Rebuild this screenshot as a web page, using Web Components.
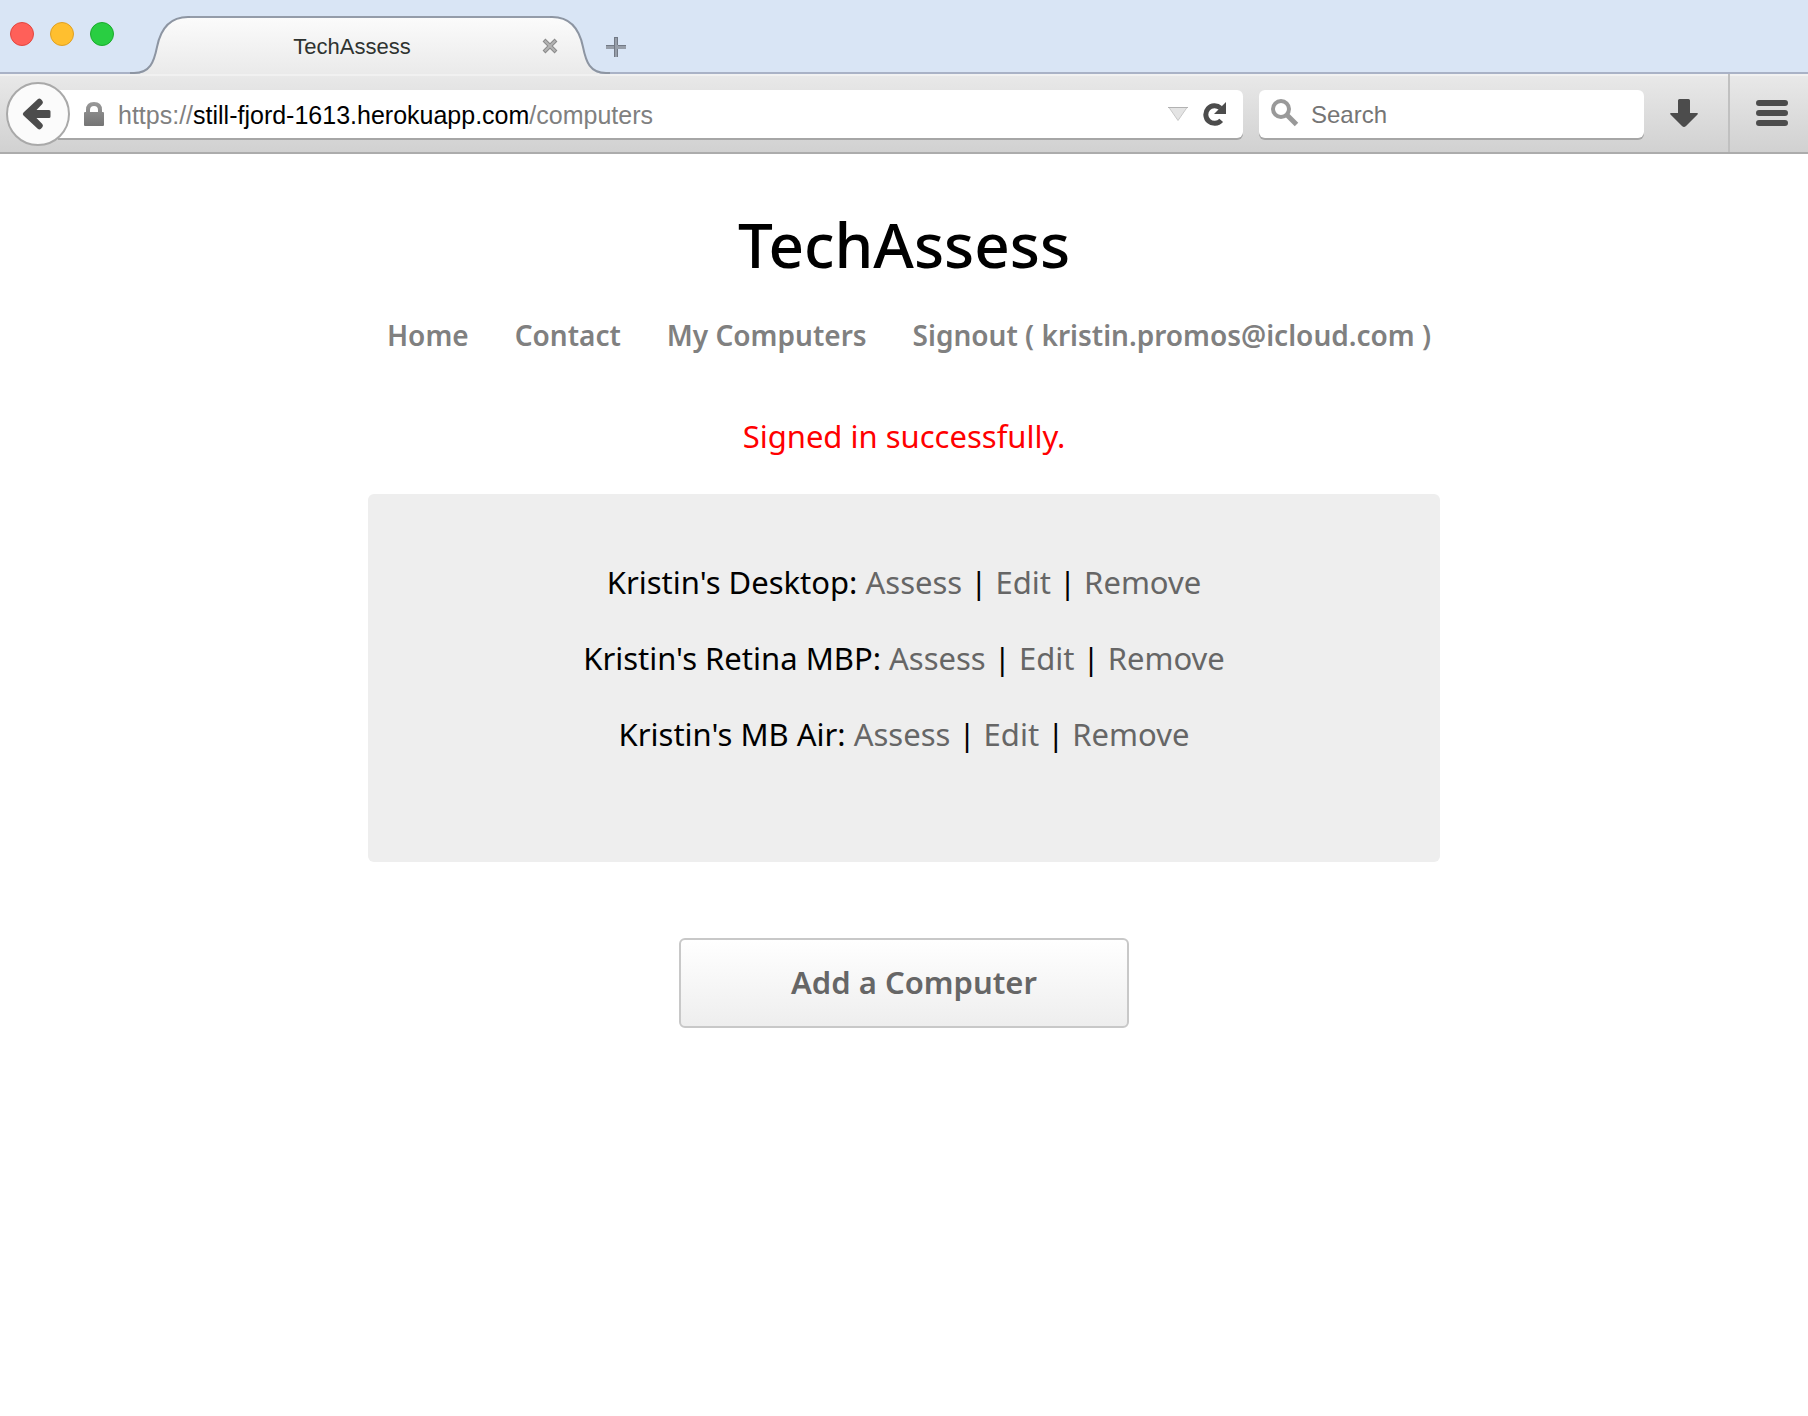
<!DOCTYPE html>
<html lang="en">
<head>
<meta charset="utf-8">
<meta name="viewport" content="width=device-width, initial-scale=1">
<title>TechAssess</title>
<style>
  html { background: #fff; }
  body { margin: 0; min-height: 100vh; font-family: "Noto Sans", sans-serif; color: #000; }
</style>
</head>
<body>
<browser-window>
  <window-controls slot="strip"></window-controls>
  <browser-tab slot="strip">TechAssess</browser-tab>
  <new-tab-button slot="strip"></new-tab-button>
  <browser-toolbar slot="toolbar"></browser-toolbar>
  <tech-page heading="TechAssess">
    <nav-link slot="nav" href="#home">Home</nav-link>
    <nav-link slot="nav" href="#contact">Contact</nav-link>
    <nav-link slot="nav" href="#computers">My Computers</nav-link>
    <nav-link slot="nav" href="#signout">Signout ( kristin.promos@icloud.com )</nav-link>
    <flash-message>Signed in successfully.</flash-message>
    <computer-list>
      <computer-row>Kristin's Desktop:</computer-row>
      <computer-row>Kristin's Retina MBP:</computer-row>
      <computer-row>Kristin's MB Air:</computer-row>
    </computer-list>
    <action-button>Add a Computer</action-button>
  </tech-page>
</browser-window>

<script>
const define = (name, html) => {
  const template = document.createElement('template');
  template.innerHTML = html;
  customElements.define(name, class extends HTMLElement {
    constructor() {
      super();
      this.attachShadow({ mode: 'open' }).append(template.content.cloneNode(true));
    }
    connectedCallback() {
      for (const el of this.shadowRoot.querySelectorAll('[data-href]')) el.href = this.getAttribute('href') || '#';
      for (const el of this.shadowRoot.querySelectorAll('[data-heading]')) el.textContent = this.getAttribute('heading');
    }
  });
};

define('browser-window', `
<style>
  :host { display: block; }
  header { font-family: "Liberation Sans", Arial, sans-serif; }
  .strip {
    display: flex; height: 74px;
    background: linear-gradient(#a9b2c6, #a9b2c6) bottom / 100% 2px no-repeat, #d9e5f5;
  }
</style>
<header>
  <div class="strip"><slot name="strip"></slot></div>
  <slot name="toolbar"></slot>
</header>
<slot></slot>`);

define('window-controls', `
<style>
  :host { display: flex; gap: 16px; padding: 22px 16px 0 10px; }
  button { width: 24px; height: 24px; padding: 0; box-sizing: border-box; border-radius: 50%; border: 1px solid; }
  .close { background: #ff6059; border-color: #e2463f; }
  .min { background: #ffbf2f; border-color: #dfa023; }
  .max { background: #29ce42; border-color: #1bab2c; }
</style>
<button class="close" aria-label="Close window"></button>
<button class="min" aria-label="Minimize"></button>
<button class="max" aria-label="Zoom"></button>`);

define('browser-tab', `
<style>
  :host { display: grid; grid-template-columns: 60px 1fr 60px; width: 480px; height: 74px; }
  svg { display: block; }
  .left, .right, .mid { grid-row: 1; height: 74px; }
  .left { grid-column: 1; }
  .right { grid-column: 3; }
  .mid {
    grid-column: 2; box-sizing: border-box; margin-top: 16px; height: 58px;
    border-top: 2px solid #949ca9; background: linear-gradient(#fbfbfb, #eaeaea);
  }
  .content {
    grid-row: 1; grid-column: 1 / 4; z-index: 1;
    display: flex; align-items: center; gap: 26px; padding: 20px 50px 0 60px;
  }
  .title { flex: 1; text-align: center; font-size: 22px; line-height: 26px; color: #2f3330; }
  button { width: 20px; height: 20px; padding: 0; border: 0; background: none; margin-bottom: 2px; }
</style>
<svg class="left" width="60" height="74" viewBox="0 0 60 74">
  <defs><linearGradient id="g" x1="0" y1="16" x2="0" y2="74" gradientUnits="userSpaceOnUse"><stop stop-color="#fcfcfc"/><stop offset="1" stop-color="#eaeaea"/></linearGradient></defs>
  <path d="M4 74C21 74 24 62 27 47C31 27 41 17 58 17H60V74Z" fill="url(#g)"/>
  <path d="M0 73H4C20 73 24 62 27 47C31 27 41 17 58 17H60" fill="none" stroke="#8d95a2" stroke-width="2"/>
</svg>
<div class="mid"></div>
<svg class="right" width="60" height="74" viewBox="0 0 60 74">
  <defs><linearGradient id="h" x1="0" y1="16" x2="0" y2="74" gradientUnits="userSpaceOnUse"><stop stop-color="#fcfcfc"/><stop offset="1" stop-color="#eaeaea"/></linearGradient></defs>
  <path d="M56 74C39 74 36 62 33 47C29 27 19 17 2 17H0V74Z" fill="url(#h)"/>
  <path d="M60 73H56C40 73 36 62 33 47C29 27 19 17 2 17H0" fill="none" stroke="#8d95a2" stroke-width="2"/>
</svg>
<div class="content">
  <span class="title"><slot></slot></span>
  <button aria-label="Close tab"><svg width="20" height="20" viewBox="0 0 20 20"><path d="M4 4L16 16M16 4L4 16" stroke="#8a8a8a" stroke-width="4"/><path d="M4.700 4.700L15.300 15.300M15.300 4.700L4.700 15.300" stroke="#b3b3b3" stroke-width="2"/></svg></button>
</div>`);

define('new-tab-button', `
<style>
  :host { display: flex; align-items: center; padding-top: 20px; }
  button { display: block; width: 20px; height: 20px; padding: 0; border: 0; background: none; margin-left: -4px; z-index: 1; }
  svg { display: block; }
</style>
<button aria-label="New tab"><svg width="20" height="20" viewBox="0 0 20 20"><path d="M8 0H12V8H20V12H12V20H8V12H0V8H8Z" fill="#979ea9"/><path d="M8 0H12V1H8ZM0 8H8V9H0ZM12 8H20V9H12ZM8 0H9V20H8ZM11 0H12V8H11ZM11 12H12V20H11Z" fill="#727985"/></svg></button>`);

define('browser-toolbar', `
<style>
  :host {
    display: flex; align-items: center; box-sizing: border-box; height: 80px; padding-left: 6px;
    background: linear-gradient(#e9e9e9, #d1d1d1); border-bottom: 2px solid #acacac;
    box-shadow: inset 0 2px #f1f1f1;
  }
  button { padding: 0; border: 0; background: none; flex: none; }
  svg { display: block; flex: none; }
  .back {
    display: grid; place-items: center; width: 64px; height: 64px; box-sizing: border-box;
    border: 2px solid #a9a9a9; border-radius: 50%; background: #fbfbfb; z-index: 1; margin-top: 2px;
    padding-right: 2px;
  }
  .field {
    display: flex; align-items: center; height: 48px; margin-top: 2px; border-radius: 6px; background: #fff;
    box-shadow: 0 2px #a6a6a6; font-size: 25px; line-height: 30px; box-sizing: border-box;
  }
  .url { flex: 1; margin-left: -12px; padding: 0 16px 0 26px; color: #808080; border-radius: 0 6px 6px 0; min-width: 0; }
  .address { flex: 1; margin-left: 14px; padding-top: 2px; white-space: nowrap; overflow: hidden; }
  .address b { font-weight: 400; color: #000; }
  .drop { margin-right: 15px; }
  .search { width: 385px; margin-left: 16px; padding: 0 12px; gap: 12px; font-size: 24px; }
  .search svg { margin-bottom: 2px; }
  input { flex: 1; min-width: 0; border: 0; padding: 2px 0 0; background: none; font: inherit; height: 30px; outline: 0; color: #000; }
  input::placeholder { color: #757575; opacity: 1; }
  .downloads { width: 84px; display: grid; place-items: center; padding-right: 4px; }
  .menu {
    flex: none; width: 80px; height: 78px; display: grid; place-items: center; padding-left: 6px;
    border-left: 2px solid #c0c0c0;
  }
</style>
<button class="back" aria-label="Back">
  <svg width="32" height="32" viewBox="0 0 32 32"><path d="M2.500 14.500L17 1Q18.500 0 20 1.200L21.500 3Q22.500 4.500 21.300 6L15.500 12H28Q29.500 12 29.500 13.500V18.500Q29.500 20 28 20H15.500L21.300 26Q22.500 27.500 21.500 29L20 30.800Q18.500 32 17 31L2.500 17.500Q1 16 2.500 14.500Z" fill="#4c4c4c"/></svg>
</button>
<div class="field url">
  <svg width="20" height="24" viewBox="0 0 20 24" role="img" aria-label="Secure"><defs><linearGradient id="k" x1="0" y1="0" x2="0" y2="1"><stop stop-color="#999"/><stop offset="1" stop-color="#747474"/></linearGradient></defs><path d="M1 10H2V8Q2 0 10 0T18 8V10H19Q20 10 20 11V23Q20 24 19 24H1Q0 24 0 23V11Q0 10 1 10ZM6 10H14V8Q14 4 10 4T6 8Z" fill="url(#k)"/></svg>
  <div class="address" role="textbox" aria-label="Address" contenteditable="true" spellcheck="false">https://<b>still-fjord-1613.herokuapp.com</b>/computers</div>
  <button class="drop" aria-label="History"><svg width="20" height="16" viewBox="0 0 20 16"><path d="M1 1.500H19L10 14.500Z" fill="#e4e4e4" stroke="#c8c8c8"/><path d="M0 1.500H20" stroke="#b2b2b2"/></svg></button>
  <button aria-label="Reload"><svg width="24" height="24" viewBox="0 0 24 24"><path d="M18.200 18.400A8.800 8.800 0 1 1 17.500 6" fill="none" stroke="#4c4c4c" stroke-width="5"/><path d="M23 0V12H11Z" fill="#4c4c4c"/></svg></button>
</div>
<label class="field search">
  <svg width="28" height="28" viewBox="0 0 28 28"><circle cx="10" cy="10" r="8" fill="none" stroke="#999" stroke-width="4"/><path d="M15.500 15.500L25.500 25.500" stroke="#999" stroke-width="5"/></svg>
  <input type="search" placeholder="Search" aria-label="Search">
</label>
<button class="downloads" aria-label="Downloads"><svg width="28" height="28" viewBox="0 0 28 28"><path d="M9.500 0H18.500Q20 0 20 1.500V14H27Q28.500 14 27.500 15.500L16 27Q14 29 12 27L0.500 15.500Q-0.500 14 1 14H8V1.500Q8 0 9.500 0Z" fill="#4c4c4c"/></svg></button>
<button class="menu" aria-label="Menu"><svg width="32" height="26" viewBox="0 0 32 26"><path d="M3 3H29M3 13H29M3 23H29" stroke="#4c4c4c" stroke-width="6" stroke-linecap="round"/></svg></button>`);

define('tech-page', `
<style>
  :host { display: block; }
  main { display: flex; flex-direction: column; align-items: center; padding: 48px 16px; }
  h1 { margin: 0 0 29px; font-size: 62px; line-height: 84px; font-weight: 500; }
  nav { display: flex; flex-wrap: wrap; justify-content: center; gap: 0 46px; padding-left: 10px; margin-bottom: 59px; }
</style>
<main>
  <h1 data-heading></h1>
  <nav><slot name="nav"></slot></nav>
  <slot></slot>
</main>`);

define('nav-link', `
<style>
  :host { display: block; font-size: 28px; line-height: 40px; font-weight: 600; }
  a { color: #808080; text-decoration: none; }
</style>
<a data-href><slot></slot></a>`);

define('flash-message', `
<style>
  :host { display: block; margin-bottom: 36px; font-size: 31px; line-height: 44px; color: #f00; }
  p { margin: 0; }
</style>
<p role="status"><slot></slot></p>`);

define('computer-list', `
<style>
  :host {
    display: block; box-sizing: border-box; width: 100%; max-width: 1072px; padding: 50px 16px 90px;
    margin-bottom: 76px; border-radius: 6px; background: #eee;
  }
</style>
<slot></slot>`);

define('computer-row', `
<style>
  :host { display: block; text-align: center; font-size: 31px; line-height: 76px; }
  a { color: #666; text-decoration: none; }
</style>
<slot></slot> <a href="#assess">Assess</a> | <a href="#edit">Edit</a> | <a href="#remove">Remove</a>`);

define('action-button', `
<style>
  :host { display: block; width: 450px; max-width: 100%; }
  button {
    display: block; box-sizing: border-box; width: 100%; height: 90px; padding: 0 0 2px 20px;
    border: 2px solid #c8c8c8; border-radius: 6px; background: linear-gradient(#fff, #eee);
    font: inherit; font-size: 31px; line-height: 44px; font-weight: 600; color: #666;
  }
</style>
<button type="button"><slot></slot></button>`);
</script>
</body>
</html>
